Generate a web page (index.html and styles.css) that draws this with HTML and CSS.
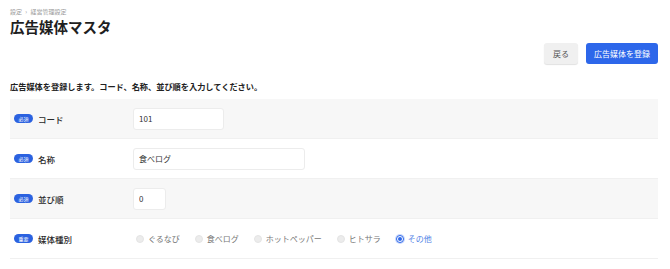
FILE: index.html
```html
<!doctype html>
<html lang="ja">
<head>
    <meta charset="UTF-8">
    <title>広告媒体マスタ</title>
    <link rel="stylesheet" href="styles.css">
</head>
<body>
    <div class="page">
        <div class="crumbs">設定 <span class="sep">›</span> 経営管理設定</div>
        <h1 class="title">広告媒体マスタ</h1>
        <div class="actions">
            <button class="btn btn-back">戻る</button>
            <button class="btn btn-primary">広告媒体を登録</button>
        </div>
        <p class="lead">広告媒体を登録します。コード、名称、並び順を入力してください。</p>
        <div class="form">
            <div class="row shade">
                <div class="label"><span class="badge">必須</span>コード</div>
                <div class="field"><input class="input w-code" type="text" value="101"></div>
            </div>
            <div class="row">
                <div class="label"><span class="badge">必須</span>名称</div>
                <div class="field"><input class="input w-name" type="text" value="食べログ"></div>
            </div>
            <div class="row shade">
                <div class="label"><span class="badge">必須</span>並び順</div>
                <div class="field"><input class="input w-sort" type="text" value="0"></div>
            </div>
            <div class="row">
                <div class="label"><span class="badge">重要</span>媒体種別</div>
                <div class="field radios">
                    <label class="radio disabled"><span class="dot"></span>ぐるなび</label>
                    <label class="radio disabled"><span class="dot"></span>食べログ</label>
                    <label class="radio disabled"><span class="dot"></span>ホットペッパー</label>
                    <label class="radio disabled"><span class="dot"></span>ヒトサラ</label>
                    <label class="radio checked"><span class="dot"></span>その他</label>
                </div>
            </div>
        </div>
    </div>
</body>
</html>
```

FILE: styles.css
```css
*{
    margin: 0;
    padding: 0;
    box-sizing: border-box;
}
body{
    font-family: "Noto Sans CJK JP", "Noto Sans", sans-serif;
    color: #2a2a2a;
    background: #fff;
}
/***layout***/
.page{
    padding: 8px 12px 0 10px;
}
.crumbs{
    font-size: 6px;
    line-height: 8px;
    color: #9a9a9a;
}
.crumbs .sep{
    margin: 0 2px;
}
.title{
    font-size: 14.5px;
    line-height: 20px;
    font-weight: 700;
    margin-top: 1px;
    color: #1f1f1f;
}
.actions{
    display: flex;
    justify-content: flex-end;
    gap: 8px;
    margin-top: 6px;
}
.btn{
    font-family: inherit;
    font-size: 8px;
    height: 21px;
    border: none;
    border-radius: 3px;
    cursor: pointer;
}
.btn-back{
    width: 34px;
    background: #f0f0f0;
    color: #555;
    box-shadow: 0 1px 1px rgba(0,0,0,0.12);
}
.btn-primary{
    width: 72px;
    background: #2d67ea;
    color: #fff;
}
.lead{
    margin-top: 16px;
    font-size: 8.2px;
    line-height: 12px;
    font-weight: 700;
    color: #222;
}
/***form***/
.form{
    margin-top: 7px;
}
.row{
    display: grid;
    grid-template-columns: 123px 1fr;
    align-items: center;
    height: 40px;
    border-bottom: 1px solid #f0f0f0;
}
.row.shade{
    background: #f7f7f7;
}
.label{
    display: flex;
    align-items: center;
    padding-left: 4px;
    font-size: 8.5px;
    font-weight: 500;
    color: #2a2a2a;
}
.badge{
    display: inline-block;
    width: 19px;
    height: 9px;
    line-height: 9px;
    margin-right: 5px;
    border-radius: 5px;
    background: #2b62e0;
    color: #fff;
    font-size: 5px;
    font-weight: 400;
    text-align: center;
}
.input{
    display: block;
    height: 22px;
    padding: 0 5px;
    border: 1px solid #ececec;
    border-radius: 3px;
    background: #fff;
    font-family: inherit;
    font-size: 8px;
    color: #333;
    outline: none;
}
.w-code{
    width: 91px;
}
.w-name{
    width: 172px;
}
.w-sort{
    width: 33px;
}
.radios{
    display: flex;
    align-items: center;
    gap: 15px;
    padding-left: 3px;
}
.radio{
    display: flex;
    align-items: center;
    gap: 4px;
    font-size: 8px;
    color: #777;
}
.radio .dot{
    width: 8px;
    height: 8px;
    border-radius: 50%;
    background: #ececec;
    border: 1px solid #e4e4e4;
    position: relative;
}
.radio.checked{
    color: #4f7fe6;
}
.radio.checked .dot{
    background: #fff;
    border: 1px solid #2d67ea;
    box-shadow: 0 0 0 1px #c9d8fb;
}
.radio.checked .dot::after{
    content: "";
    position: absolute;
    left: 1px;
    top: 1px;
    width: 4px;
    height: 4px;
    border-radius: 50%;
    background: #2d67ea;
}
```
